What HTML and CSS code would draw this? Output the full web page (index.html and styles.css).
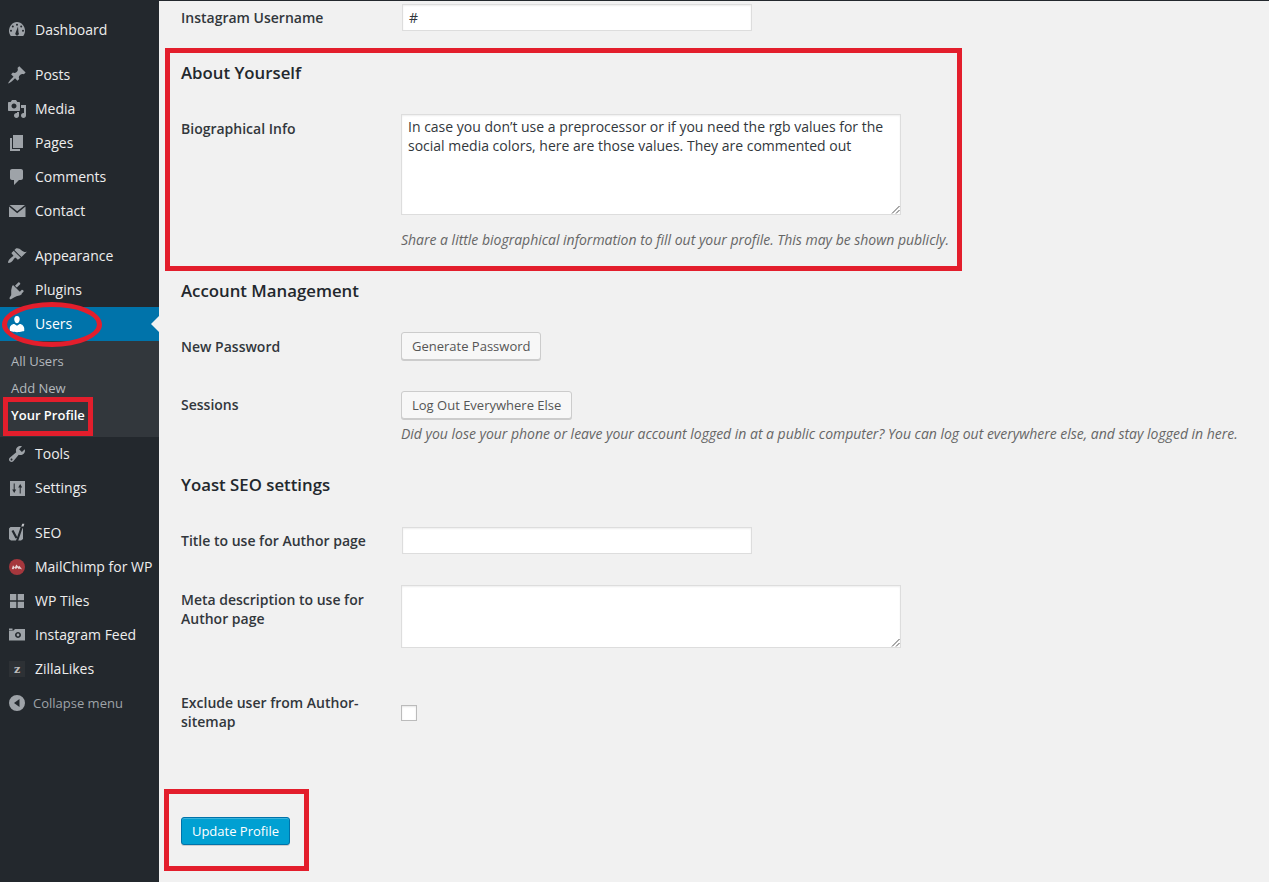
FILE: index.html
```html
<!DOCTYPE html>
<html lang="en">
<head>
<meta charset="utf-8">
<title>Your Profile</title>
<link rel="stylesheet" href="styles.css">
</head>
<body>
<div class="layout">
  <nav class="sidebar">
    <ul class="menu">
      <li class="item"><svg class="ico" viewBox="0 0 20 20"><path d="M3.76 16h12.48c1.100-1.430 1.760-3.230 1.760-5.180C18 6.110 14.420 2 10 2S2 6.110 2 10.820c0 1.950.66 3.750 1.760 5.180Z" fill="#9ea3a8"/><circle cx="10" cy="4.800" r="1" fill="#23282d"/><circle cx="5.800" cy="6.600" r="1" fill="#23282d"/><circle cx="14.200" cy="6.600" r="1" fill="#23282d"/><circle cx="4" cy="10.800" r="1" fill="#23282d"/><circle cx="16" cy="10.800" r="1" fill="#23282d"/><path d="M11 6.500 11.500 12.600a1.800 1.800 0 1 1-2.800 0Z" fill="#23282d"/></svg><span>Dashboard</span></li>
    </ul>
    <ul class="menu">
      <li class="item"><svg class="ico" viewBox="0 0 20 20"><path d="M10.44 3.020l1.820-1.820 6.360 6.350-1.830 1.820c-1.050-.68-2.480-.57-3.410.36l-.75.75c-.92.93-1.040 2.350-.35 3.410l-1.830 1.820-2.410-2.410-2.800 2.790c-.42.42-3.380 2.710-3.800 2.290s1.860-3.390 2.280-3.810l2.790-2.790L4.100 9.360l1.830-1.820c1.050.69 2.480.57 3.400-.36l.75-.75c.93-.92 1.050-2.350.36-3.410z" fill="#9ea3a8"/></svg><span>Posts</span></li>
      <li class="item"><svg class="ico" viewBox="0 0 20 20"><path d="M13 11V4c0-.55-.45-1-1-1h-1.670L9 1H5L3.670 3H2c-.55 0-1 .45-1 1v7c0 .55.45 1 1 1h10c.55 0 1-.45 1-1zM7 4.500c1.380 0 2.500 1.120 2.500 2.500S8.380 9.500 7 9.500 4.500 8.380 4.500 7 5.620 4.500 7 4.500zM14 6h5v10.500c0 1.380-1.120 2.500-2.500 2.500S14 17.880 14 16.500s1.120-2.500 2.500-2.500c.17 0 .34.02.5.05V9h-3V6zm-4 8.050V13h2v3.500c0 1.380-1.120 2.500-2.500 2.500S7 17.880 7 16.500 8.120 14 9.500 14c.17 0 .34.02.5.05z" fill="#9ea3a8" fill-rule="evenodd"/></svg><span>Media</span></li>
      <li class="item"><svg class="ico" viewBox="0 0 20 20"><path d="M6 15V2h10v13H6zm-1 1h8v2H3V5h2v11z" fill="#9ea3a8"/></svg><span>Pages</span></li>
      <li class="item"><svg class="ico" viewBox="0 0 20 20"><path d="M5 2h9c1.100 0 2 .9 2 2v7c0 1.100-.9 2-2 2h-2l-5 5v-5H5c-1.100 0-2-.9-2-2V4c0-1.100.9-2 2-2z" fill="#9ea3a8"/></svg><span>Comments</span></li>
      <li class="item"><svg class="ico" viewBox="0 0 20 20"><path d="M2.500 4h15.500L10.200 10.300Z" fill="#9ea3a8"/><path d="M2 5.600 10.200 12.200 18.500 5.600V16H2Z" fill="#9ea3a8"/></svg><span>Contact</span></li>
    </ul>
    <ul class="menu">
      <li class="item"><svg class="ico" viewBox="0 0 20 20"><path d="M14.480 11.060L7.410 3.990l1.500-1.500c.5-.56 2.300-.47 3.510.32 1.210.8 1.430 1.280 2.910 2.100 1.180.64 2.450 1.260 4.450.85zm-.71.71L6.700 4.700 4.930 6.470c-.39.39-.39 1.020 0 1.410l1.060 1.060c.39.39.39 1.030 0 1.420-.6.6-1.430 1.110-2.210 1.690-.35.26-.7.53-1.010.84-1.340 1.340-2.100 3.300-1.500 3.900.6.6 2.560-.16 3.900-1.500.31-.31.58-.66.84-1.010.58-.78 1.090-1.610 1.690-2.210.39-.39 1.030-.39 1.420 0l1.060 1.060c.39.39 1.020.39 1.410 0z" fill="#9ea3a8"/></svg><span>Appearance</span></li>
      <li class="item"><svg class="ico" viewBox="0 0 20 20"><path d="M13.110 4.360L9.870 7.600 8 5.730l3.240-3.240c.35-.34 1.050-.2 1.560.32.52.51.66 1.210.31 1.550zM5.110 6.130l.91-1.120 9.010 9.010-1.190.84c-.71.71-2.630 1.160-3.820 1.050L7 17.500 3.500 19.500l-1.200-1.300 1.900-3.300 0-3.200c-.16-1.190.29-3.110.91-5.570zM16.460 11.840l-3.240 3.240-1.870-1.870 3.240-3.240c.35-.35 1.050-.21 1.560.31.52.51.66 1.210.31 1.560z" fill="#9ea3a8"/></svg><span>Plugins</span></li>
      <li class="item current"><svg class="ico" viewBox="0 0 20 20"><path d="M10 9.250c-2.270 0-2.730-3.440-2.730-3.440C7 4.020 7.820 2 9.970 2c2.160 0 2.980 2.020 2.710 3.810 0 0-.41 3.440-2.680 3.440zm0 2.570L12.720 10c2.390 0 4.520 2.330 4.520 4.530v2.490s-3.650 1.130-7.240 1.130c-3.650 0-7.240-1.130-7.240-1.130v-2.490c0-2.250 1.940-4.480 4.470-4.480z" fill="#fff"/></svg><span>Users</span></li>
      <li class="submenu">
        <a class="sub-link">All Users</a>
        <a class="sub-link">Add New</a>
        <a class="sub-link sub-active">Your Profile</a>
      </li>
      <li class="item"><svg class="ico" viewBox="0 0 20 20"><path d="M16.680 9.770c-1.340 1.340-3.300 1.670-4.950.99l-5.410 6.520c-.99.99-2.590.99-3.580 0s-.99-2.590 0-3.570l6.520-5.420c-.68-1.650-.35-3.610.99-4.950 1.280-1.280 3.120-1.620 4.720-1.060l-2.890 2.890 2.820 2.820 2.860-2.860c.53 1.580.18 3.390-1.080 4.640zM3.810 16.210c.4.39 1.030.39 1.420 0 .4-.4.4-1.030 0-1.430-.39-.39-1.020-.39-1.420 0-.39.4-.39 1.030 0 1.430z" fill="#9ea3a8"/></svg><span>Tools</span></li>
      <li class="item"><svg class="ico" viewBox="0 0 20 20"><path fill-rule="evenodd" d="M3 3h15v15H3ZM6.700 5.500v6H5.200l2 3.500 2-3.500H7.700v-6ZM13.700 15.500v-6h1.500l-2-3.500-2 3.500h1.500v6Z" fill="#9ea3a8"/></svg><span>Settings</span></li>
    </ul>
    <ul class="menu">
      <li class="item"><svg class="ico" viewBox="0 0 20 20"><path d="M3.500 4h10l2.500 1.500v10.500l-2 1.500h-10l-2-1.500V5.500Z" fill="#9ea3a8"/><path d="M5.500 7.500 9.500 15M15.800 1 9.800 18.500" stroke="#23282d" stroke-width="2.200" fill="none"/><path d="M15.200.8h2.200l-.9 2.800h-2.200Z" fill="#c3c5c8"/></svg><span>SEO</span></li>
      <li class="item"><svg class="ico" viewBox="0 0 20 20"><circle cx="10" cy="10" r="8" fill="#a5373d"/><path d="M4.800 12 6 8.200l1.800 2.300L9.400 7.500l1.800 2.300 1.100-1 2.900 3.700-2.500-1-.8.7-1.700-1.800-1.200 1.800-1.500-1.400-1 1.400Z" fill="#e6d5d6"/></svg><span>MailChimp for WP</span></li>
      <li class="item"><svg class="ico" viewBox="0 0 20 20"><path d="M3 3h6.300v6.300H3ZM10.700 3H17v6.300h-6.300ZM3 10.700h6.300V17H3ZM10.700 10.700H17V17h-6.300Z" fill="#9ea3a8"/></svg><span>WP Tiles</span></li>
      <li class="item"><svg class="ico" viewBox="0 0 20 20"><path d="M2 3.500h3.500v1.500H2Z" fill="#9ea3a8"/><path fill-rule="evenodd" d="M2 5.500h4.500L8 4h10v11.500H2ZM11 7a3 3 0 1 0 .01 0Z" fill="#9ea3a8"/><circle cx="11" cy="10" r="1.400" fill="#9ea3a8"/></svg><span>Instagram Feed</span></li>
      <li class="item"><span class="zilla">z</span><span>ZillaLikes</span></li>
      <li class="item collapse"><svg class="ico" viewBox="0 0 20 20"><path fill-rule="evenodd" d="M10 2a8 8 0 1 1 0 16 8 8 0 0 1 0-16ZM12.500 6 7 10l5.500 4Z" fill="#9ea3a8"/></svg><span>Collapse menu</span></li>
    </ul>
  </nav>

  <main class="content">
    <div class="row row-insta">
      <label class="label label-insta">Instagram Username</label>
      <div class="input">#</div>
    </div>

    <h2 class="heading heading-about">About Yourself</h2>
    <div class="row row-bio">
      <label class="label label-bio">Biographical Info</label>
      <div class="field">
        <div class="textarea bio">In case you don’t use a preprocessor or if you need the rgb values for the social media colors, here are those values. They are commented out<svg class="grip" viewBox="0 0 9 9"><path d="M8.500 1 1 8.500M8.500 5 5 8.500" stroke="#555" fill="none"/></svg></div>
        <p class="desc desc-bio">Share a little biographical information to fill out your profile. This may be shown publicly.</p>
      </div>
    </div>

    <h2 class="heading heading-account">Account Management</h2>
    <div class="row row-password">
      <label class="label label-password">New Password</label>
      <button class="btn">Generate Password</button>
    </div>
    <div class="row row-sessions">
      <label class="label label-session">Sessions</label>
      <div class="field">
        <button class="btn">Log Out Everywhere Else</button>
        <p class="desc desc-session">Did you lose your phone or leave your account logged in at a public computer? You can log out everywhere else, and stay logged in here.</p>
      </div>
    </div>

    <h2 class="heading heading-yoast">Yoast SEO settings</h2>
    <div class="row row-title">
      <label class="label label-title">Title to use for Author page</label>
      <div class="input"></div>
    </div>
    <div class="row row-meta">
      <label class="label label-meta">Meta description to use for Author page</label>
      <div class="textarea meta"><svg class="grip" viewBox="0 0 9 9"><path d="M8.500 1 1 8.500M8.500 5 5 8.500" stroke="#555" fill="none"/></svg></div>
    </div>
    <div class="row row-exclude">
      <label class="label">Exclude user from Author-sitemap</label>
      <span class="check"></span>
    </div>
    <button class="btn-primary">Update Profile</button>
  </main>
</div>

<div class="mark mark-about"></div>
<div class="mark mark-profile"></div>
<div class="mark mark-update"></div>
<div class="mark mark-users"></div>
</body>
</html>
```

FILE: styles.css
```css
* { box-sizing: border-box; }
html, body { margin: 0; padding: 0; height: 100%; }
body {
  background: #f1f1f1;
  color: #32373c;
  font-family: "Open Sans", "Liberation Sans", sans-serif;
  font-size: 14px;
  line-height: 19px;
  overflow: hidden;
  position: relative;
}
.layout { display: flex; height: 882px; }

/* Sidebar */
.sidebar {
  width: 159px;
  flex: none;
  background: #23282d;
  color: #eee;
  padding-top: 13px;
}
.menu { list-style: none; margin: 0 0 11px; padding: 0; }
.item {
  height: 34px;
  display: flex;
  align-items: center;
  padding-left: 7px;
  gap: 8px;
  position: relative;
  white-space: nowrap;
}
.item span:last-child { padding-bottom: 2px; }
.ico { width: 20px; height: 20px; flex: none; }
.current { background: #0073aa; color: #fff; }
.current::after {
  content: "";
  position: absolute;
  right: 0;
  top: 50%;
  margin-top: -8px;
  border: 8px solid transparent;
  border-right-color: #f1f1f1;
  border-left-width: 0;
}
.submenu {
  height: 96px;
  background: #32373c;
  padding-top: 7px;
  display: flex;
  flex-direction: column;
  font-size: 13px;
}
.sub-link { height: 27px; line-height: 27px; padding-left: 11px; color: #b4b9be; }
.sub-active { color: #fff; font-weight: 600; }
.zilla {
  width: 16px;
  height: 16px;
  flex: none;
  margin: 0 2px;
  display: flex;
  align-items: center;
  justify-content: center;
  font: 700 11px "DejaVu Serif", serif;
  color: #bbb;
  background: #2d3135;
}
.collapse { color: #9ea3a8; font-size: 13px; gap: 6px; }
.collapse span:last-child { padding-bottom: 0; }

/* Content */
.content {
  flex: 1;
  min-width: 0;
  padding-left: 22px;
  border-top: 1px solid #23282d;
}
.row { display: flex; align-items: flex-start; }
.label { width: 220px; flex: none; font-weight: 600; color: #32373c; }
.heading {
  margin: 0;
  font-size: 16.800px;
  line-height: 22px;
  font-weight: 600;
  color: #23282d;
}
.input {
  width: 350px;
  height: 27px;
  margin-left: 1px;
  background: #fff;
  border: 1px solid #ddd;
  box-shadow: inset 0 1px 2px rgba(0,0,0,.07);
  padding: 3px 6px;
}
.field { display: flex; flex-direction: column; align-items: flex-start; }
.textarea {
  width: 500px;
  background: #fff;
  border: 1px solid #ddd;
  box-shadow: inset 0 1px 2px rgba(0,0,0,.07);
  padding: 2px 6px;
  position: relative;
}
.bio { height: 101px; }
.meta { height: 63px; }
.grip { position: absolute; right: 0; bottom: 0; width: 9px; height: 9px; }
.desc {
  margin: 0;
  font-style: italic;
  color: #666;
  white-space: nowrap;
  letter-spacing: -.015px;
}
.btn {
  height: 28px;
  padding: 0 10px;
  font: 13px/26px "Open Sans", "Liberation Sans", sans-serif;
  color: #555;
  background: #f7f7f7;
  border: 1px solid #ccc;
  border-radius: 3px;
  box-shadow: 0 1px 0 #ccc;
  white-space: nowrap;
}
.btn-primary {
  display: block;
  height: 28px;
  width: 109px;
  padding: 0;
  font: 13px/26px "Open Sans", "Liberation Sans", sans-serif;
  color: #fff;
  background: #00a0d2;
  border: 1px solid #0073aa;
  border-radius: 3px;
  box-shadow: inset 0 1px 0 rgba(120,200,230,.5), 0 1px 0 rgba(0,0,0,.15);
  margin-top: 86px;
}

/* Vertical rhythm of the form */
.row-insta { margin-top: 3px; }
.label-insta { padding-top: 4px; }
.heading-about { margin-top: 31px; }
.row-bio { margin-top: 30px; }
.label-bio { padding-top: 5px; }
.desc-bio { margin-top: 15px; }
.heading-account { margin-top: 31px; }
.row-password { margin-top: 30px; }
.label-password { padding-top: 5px; }
.row-sessions { margin-top: 31px; }
.label-session { padding-top: 4px; }
.desc-session { margin-top: 5px; }
.heading-yoast { margin-top: 31px; }
.row-title { margin-top: 31px; }
.label-title { padding-top: 4px; }
.row-meta { margin-top: 31px; }
.label-meta { padding-top: 5px; }
.row-exclude { margin-top: 45px; }
.check {
  width: 16px;
  height: 16px;
  background: #fff;
  border: 1px solid #bbb;
  box-shadow: inset 0 1px 2px rgba(0,0,0,.1);
  margin-top: 12px;
}

/* Red annotations drawn over the screenshot */
.mark { position: absolute; border: 5px solid #e31e2c; pointer-events: none; }
.mark-about { left: 165px; top: 48px; width: 797px; height: 223px; }
.mark-profile { left: 3px; top: 397px; width: 90px; height: 39px; }
.mark-update { left: 164px; top: 789px; width: 145px; height: 82px; }
.mark-users { left: 2px; top: 302px; width: 100px; height: 45px; border-radius: 50%; }
```
